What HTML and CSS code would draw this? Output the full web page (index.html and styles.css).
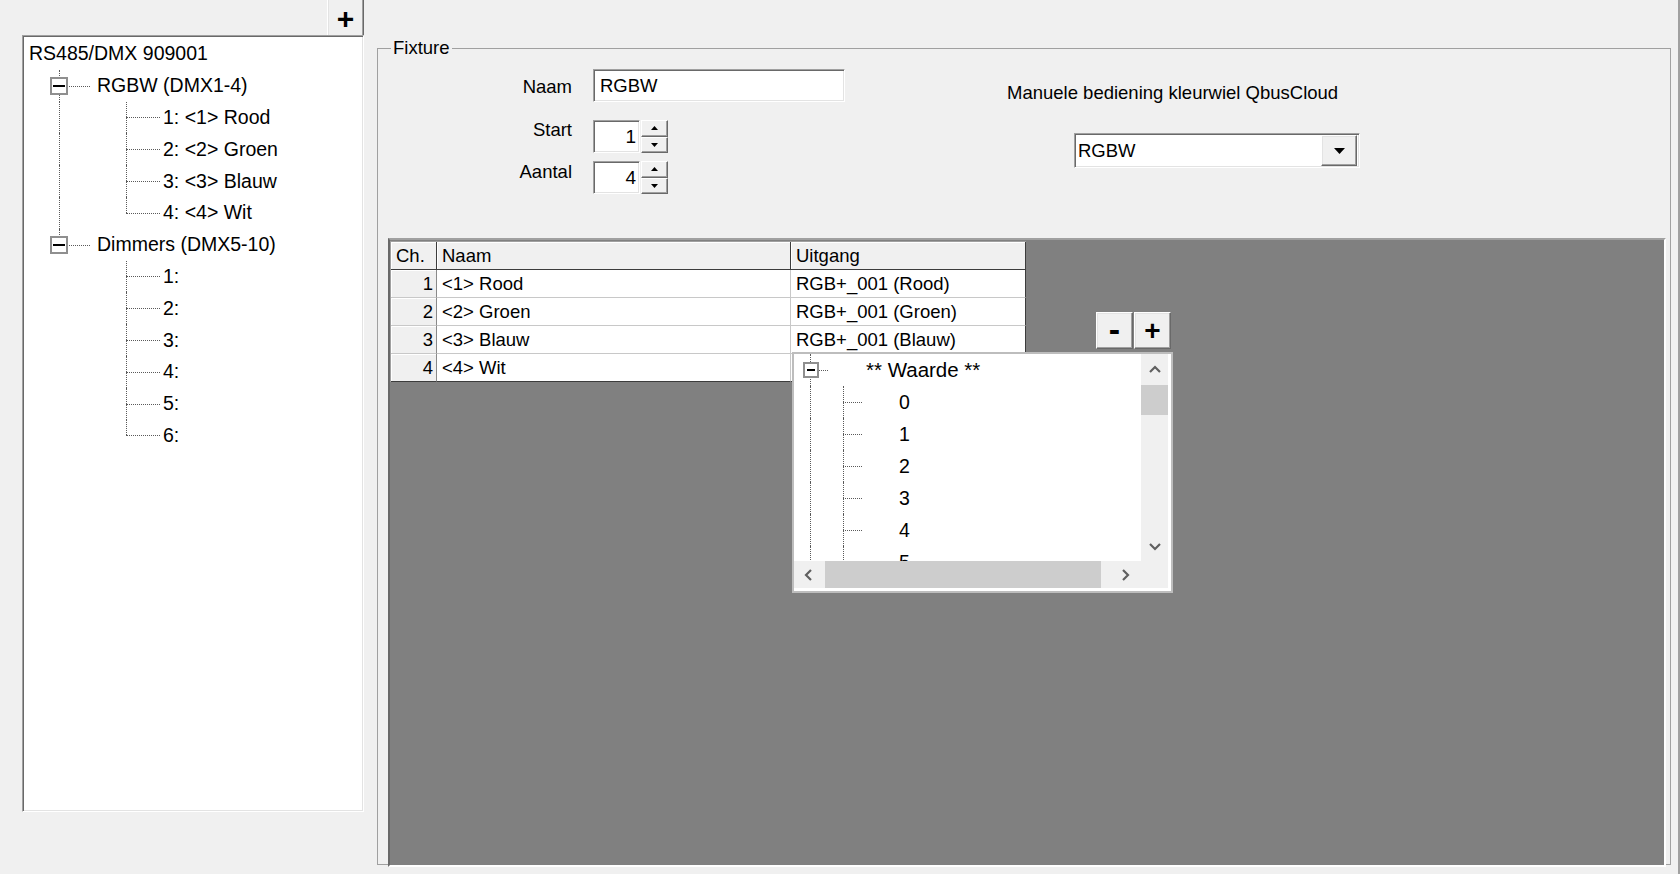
FILE: index.html
```html
<!DOCTYPE html>
<html lang="nl">
<head>
<meta charset="utf-8">
<title>Fixture</title>
<link rel="stylesheet" href="styles.css">
</head>
<body>
<div class="app">
  <div class="side">
    <div class="side-bar"><button class="btn btn-add">+</button></div>
    <div class="tree">
      <div class="trow root"><span class="tt">RS485/DMX 909001</span></div>
      <div class="trow"><span class="ln g1 t"><span class="exp"></span></span><span class="tt">RGBW (DMX1-4)</span></div>
      <div class="trow l2"><span class="ln g1 v"></span><span class="ln g2 t"></span><span class="tt">1: &lt;1&gt; Rood</span></div>
      <div class="trow l2"><span class="ln g1 v"></span><span class="ln g2 t"></span><span class="tt">2: &lt;2&gt; Groen</span></div>
      <div class="trow l2"><span class="ln g1 v"></span><span class="ln g2 t"></span><span class="tt">3: &lt;3&gt; Blauw</span></div>
      <div class="trow l2"><span class="ln g1 v"></span><span class="ln g2 l"></span><span class="tt">4: &lt;4&gt; Wit</span></div>
      <div class="trow"><span class="ln g1 l"><span class="exp"></span></span><span class="tt">Dimmers (DMX5-10)</span></div>
      <div class="trow l2"><span class="ln g1"></span><span class="ln g2 t"></span><span class="tt">1:</span></div>
      <div class="trow l2"><span class="ln g1"></span><span class="ln g2 t"></span><span class="tt">2:</span></div>
      <div class="trow l2"><span class="ln g1"></span><span class="ln g2 t"></span><span class="tt">3:</span></div>
      <div class="trow l2"><span class="ln g1"></span><span class="ln g2 t"></span><span class="tt">4:</span></div>
      <div class="trow l2"><span class="ln g1"></span><span class="ln g2 t"></span><span class="tt">5:</span></div>
      <div class="trow l2"><span class="ln g1"></span><span class="ln g2 l"></span><span class="tt">6:</span></div>
    </div>
  </div>

  <div class="main">
    <fieldset class="group">
      <legend>Fixture</legend>
      <div class="top">
        <div class="form">
          <div class="frow">
            <label class="lbl lbl-naam">Naam</label>
            <div class="edit naam">RGBW</div>
          </div>
          <div class="frow r-start">
            <label class="lbl">Start</label>
            <div class="spin">
              <div class="edit num">1</div>
              <div class="spin-btns">
                <span class="sb"><svg width="7" height="4" viewBox="0 0 7 4"><polygon points="0,4 7,4 3.5,0" fill="#000"/></svg></span>
                <span class="sb"><svg width="7" height="4" viewBox="0 0 7 4"><polygon points="0,0 7,0 3.5,4" fill="#000"/></svg></span>
              </div>
            </div>
          </div>
          <div class="frow r-aantal">
            <label class="lbl lbl-aantal">Aantal</label>
            <div class="spin">
              <div class="edit num">4</div>
              <div class="spin-btns">
                <span class="sb"><svg width="7" height="4" viewBox="0 0 7 4"><polygon points="0,4 7,4 3.5,0" fill="#000"/></svg></span>
                <span class="sb"><svg width="7" height="4" viewBox="0 0 7 4"><polygon points="0,0 7,0 3.5,4" fill="#000"/></svg></span>
              </div>
            </div>
          </div>
        </div>
        <div class="manual">
          <div class="mtitle">Manuele bediening kleurwiel QbusCloud</div>
          <div class="combo">
            <span class="ctext">RGBW</span>
            <span class="cbtn"><svg width="11" height="6" viewBox="0 0 11 6"><polygon points="0,0 11,0 5.5,6" fill="#000"/></svg></span>
          </div>
        </div>
      </div>

      <div class="panel">
        <div class="grid">
          <div class="c h">Ch.</div><div class="c h">Naam</div><div class="c h last">Uitgang</div>
          <div class="c f">1</div><div class="c">&lt;1&gt; Rood</div><div class="c last">RGB+_001 (Rood)</div>
          <div class="c f">2</div><div class="c">&lt;2&gt; Groen</div><div class="c last">RGB+_001 (Groen)</div>
          <div class="c f">3</div><div class="c">&lt;3&gt; Blauw</div><div class="c last">RGB+_001 (Blauw)</div>
          <div class="c f bot">4</div><div class="c bot">&lt;4&gt; Wit</div><div class="c last bot"></div>
        </div>

        <button class="btn btn-sm btn-minus">-</button>
        <button class="btn btn-sm btn-plus">+</button>

        <div class="popup">
          <div class="ptree">
            <div class="prow"><span class="ln p1 t"><span class="exp small"></span></span><span class="pt root-t">** Waarde **</span></div>
            <div class="prow"><span class="ln p1 v"></span><span class="ln p2 t"></span><span class="pt">0</span></div>
            <div class="prow"><span class="ln p1 v"></span><span class="ln p2 t"></span><span class="pt">1</span></div>
            <div class="prow"><span class="ln p1 v"></span><span class="ln p2 t"></span><span class="pt">2</span></div>
            <div class="prow"><span class="ln p1 v"></span><span class="ln p2 t"></span><span class="pt">3</span></div>
            <div class="prow"><span class="ln p1 v"></span><span class="ln p2 t"></span><span class="pt">4</span></div>
            <div class="prow last-row"><span class="ln p1 v"></span><span class="ln p2 t"></span><span class="pt">5</span></div>
          </div>
          <div class="vscroll">
            <span class="sbtn vbtn"><svg width="12" height="8" viewBox="0 0 12 8"><polyline points="1,7 6,2 11,7" fill="none" stroke="#606060" stroke-width="2.2"/></svg></span>
            <span class="vthumb"></span>
            <span class="vspace"></span>
            <span class="sbtn vbtn"><svg width="12" height="8" viewBox="0 0 12 8"><polyline points="1,1 6,6 11,1" fill="none" stroke="#606060" stroke-width="2.2"/></svg></span>
          </div>
          <div class="hscroll">
            <span class="sbtn hbtn-l"><svg width="8" height="12" viewBox="0 0 8 12"><polyline points="7,1 2,6 7,11" fill="none" stroke="#606060" stroke-width="2.2"/></svg></span>
            <span class="hthumb"></span>
            <span class="hspace"></span>
            <span class="sbtn hbtn-r"><svg width="8" height="12" viewBox="0 0 8 12"><polyline points="1,1 6,6 1,11" fill="none" stroke="#606060" stroke-width="2.2"/></svg></span>
          </div>
          <div class="corner"></div>
        </div>
      </div>
    </fieldset>
  </div>
</div>
</body>
</html>
```

FILE: styles.css
```css
* { box-sizing: border-box; }
html, body { margin: 0; padding: 0; }
body {
  background: #f0f0f0;
  font-family: "Liberation Sans", Arial, sans-serif;
  font-size: 18.5px;
  color: #000;
}

.app {
  display: flex;
  width: 1680px;
  height: 874px;
  border-right: 2px solid #a0a0a0;
  overflow: hidden;
}

/* ---------- buttons ---------- */
.btn {
  appearance: none;
  margin: 0;
  padding: 0;
  font-family: "Liberation Sans", Arial, sans-serif;
  font-weight: bold;
  color: #000;
  background: #f0f0f0;
  border: 1px solid;
  border-color: #fff #696969 #696969 #fff;
  box-shadow: inset -1px -1px 0 #a0a0a0, inset 1px 1px 0 #e3e3e3;
  display: flex;
  align-items: center;
  justify-content: center;
  line-height: 1;
}

/* ---------- left side ---------- */
.side { width: 377px; flex: none; }
.side-bar { height: 37px; padding-left: 327px; }
.btn-add {
  width: 37px;
  height: 39px;
  margin-top: -2px;
  font-size: 30px;
  padding-top: 2px;
}

.tree {
  margin-left: 22px;
  width: 342px;
  height: 777px;
  background: #fff;
  border: 1px solid;
  border-color: #a0a0a0 #fff #fff #a0a0a0;
  box-shadow: inset 1px 1px 0 #696969, inset -1px -1px 0 #e3e3e3;
  padding: 2px 0 0 1px;
  overflow: hidden;
}

.trow {
  display: flex;
  align-items: center;
  height: 31.8px;
  font-size: 19.5px;
  white-space: nowrap;
}
.trow.root { padding-left: 5px; }

.ln {
  position: relative;
  flex: none;
  align-self: stretch;
}
.ln.v::before, .ln.t::before, .ln.l::before {
  content: "";
  position: absolute;
  left: var(--x);
  top: 0;
  bottom: 0;
  border-left: 1px dotted #5a5a5a;
}
.ln.l::before { bottom: 50%; }
.ln.t::after, .ln.l::after {
  content: "";
  position: absolute;
  left: var(--x);
  right: 0;
  top: 50%;
  border-top: 1px dotted #5a5a5a;
}

.g1 { --x: 9px; width: 40px; margin-left: 26px; margin-right: 7px; }
.l2 .g1 { margin-right: 36px; }
.g2 { --x: 0px; width: 34px; margin-right: 3px; }

.exp {
  position: absolute;
  left: 0;
  top: 50%;
  width: 18px;
  height: 18px;
  margin-top: -9px;
  border: 2px solid #8f8f8f;
  background: #fff;
  z-index: 1;
}
.exp::after {
  content: "";
  position: absolute;
  left: 1px;
  right: 1px;
  top: 6px;
  height: 2px;
  background: #000;
}
.exp.small {
  width: 16px;
  height: 16px;
  margin-top: -8px;
}
.exp.small::after { left: 2px; right: 2px; top: 5px; }

/* ---------- main ---------- */
.main { flex: none; width: 1301px; }

.group {
  margin: 37px 0 0 0;
  padding: 0;
  width: 1294px;
  height: 828px;
  border: 1px solid #a0a0a0;
  min-width: 0;
}
.group legend {
  margin-left: 13px;
  padding: 0 2px;
  line-height: 22px;
  font-size: 18.5px;
}

.top {
  display: flex;
  height: 179px;
}

.form { width: 467px; flex: none; padding-top: 10px; }
.frow {
  display: flex;
  align-items: flex-start;
  gap: 21px;
  height: 33px;
}
.r-start { margin-top: 18px; }
.r-aantal { margin-top: 8px; }

.lbl {
  width: 194px;
  flex: none;
  text-align: right;
  line-height: 20px;
}
.lbl-naam { padding-top: 8px; }
.lbl-aantal { padding-top: 1px; }

.edit {
  background: #fff;
  border: 1px solid;
  border-color: #a0a0a0 #fff #fff #a0a0a0;
  box-shadow: inset 1px 1px 0 #696969, inset -1px -1px 0 #e3e3e3;
  height: 33px;
  line-height: 31px;
  white-space: nowrap;
}
.edit.naam { width: 252px; padding-left: 6px; }
.edit.num { width: 47px; text-align: right; padding-right: 3px; font-size: 19px; }

.spin { display: flex; }
.spin-btns {
  display: flex;
  flex-direction: column;
  width: 27px;
  margin-left: 1px;
  height: 33px;
}
.sb {
  flex: 1;
  display: flex;
  align-items: center;
  justify-content: center;
  background: #f0f0f0;
  border: 1px solid;
  border-color: #fff #696969 #696969 #fff;
  box-shadow: inset -1px -1px 0 #a0a0a0;
}

.manual { margin-left: 162px; padding-top: 24px; }
.mtitle { line-height: 20px; white-space: nowrap; }
.combo {
  margin-left: 67px;
  margin-top: 30px;
  width: 286px;
  height: 35px;
  display: flex;
  align-items: center;
  background: #fff;
  border: 1px solid;
  border-color: #a0a0a0 #fff #fff #a0a0a0;
  box-shadow: inset 1px 1px 0 #696969, inset -1px -1px 0 #e3e3e3;
}
.ctext { flex: 1; padding-left: 3px; }
.cbtn {
  width: 36px;
  height: 31px;
  margin-right: 2px;
  display: flex;
  align-items: center;
  justify-content: center;
  background: #f0f0f0;
  border: 1px solid;
  border-color: #fff #696969 #696969 #fff;
  box-shadow: inset -1px -1px 0 #a0a0a0, inset 1px 1px 0 #e3e3e3;
}

/* ---------- gray panel ---------- */
.panel {
  position: relative;
  margin-left: 10px;
  width: 1278px;
  height: 629px;
  background: #808080;
  border: 2px solid;
  border-color: #a0a0a0 #fff #fff #696969;
}

.grid {
  display: grid;
  grid-template-columns: 46px 354px 235px;
  grid-auto-rows: 28px;
  width: 636px;
  margin-top: 1px;
  border-left: 1px solid #a0a0a0;
  border-top: 1px solid #a0a0a0;
}
.c {
  background: #fff;
  border-right: 1px solid #c8c8c8;
  border-bottom: 1px solid #c8c8c8;
  padding-left: 5px;
  line-height: 27px;
  white-space: nowrap;
  overflow: hidden;
}
.c.h {
  background: #f0f0f0;
  border-right-color: #3c3c3c;
  border-bottom-color: #3c3c3c;
  box-shadow: inset 1px 1px 0 #fff;
}
.c.f {
  background: #f0f0f0;
  text-align: right;
  padding: 0 3px 0 0;
  border-right-color: #8a8a8a;
  box-shadow: inset 1px 1px 0 #fff;
}
.c.last { border-right-color: #3c3c3c; }
.c.bot { border-bottom-color: #3c3c3c; }

.btn-sm {
  position: absolute;
  top: 72px;
  width: 37px;
  height: 37px;
}
.btn-minus { left: 706px; font-size: 34px; padding-bottom: 3px; }
.btn-plus { left: 744px; font-size: 28px; }

/* ---------- popup ---------- */
.popup {
  position: absolute;
  left: 402px;
  top: 112px;
  display: grid;
  grid-template-columns: 347px 27px;
  grid-template-rows: 207px 27px;
  border: 2px solid #bdbdbd;
  padding: 0 3px 3px 0;
  background: #fff;
  z-index: 2;
}
.ptree { overflow: hidden; }
.prow {
  display: flex;
  align-items: center;
  height: 32px;
  font-size: 19.5px;
  white-space: nowrap;
}
.root-t { font-size: 20.5px; }
.p1 { --x: 7px; width: 25px; margin-left: 9px; margin-right: 15px; }
.prow:first-child .p1 { margin-right: 38px; }
.p2 { --x: 0px; width: 19px; margin-right: 37px; }

.vscroll {
  display: flex;
  flex-direction: column;
  background: #f0f0f0;
}
.sbtn {
  display: flex;
  align-items: center;
  justify-content: center;
  flex: none;
}
.vbtn { height: 29px; }
.vthumb { height: 30px; margin-top: 2px; background: #cdcdcd; flex: none; }
.vspace { flex: 1; }

.hscroll { display: flex; background: #f0f0f0; }
.hbtn-l { width: 28px; }
.hbtn-r { width: 31px; }
.hthumb { width: 276px; margin-left: 3px; background: #cdcdcd; flex: none; }
.hspace { flex: 1; }
.corner { background: #f0f0f0; }
```
